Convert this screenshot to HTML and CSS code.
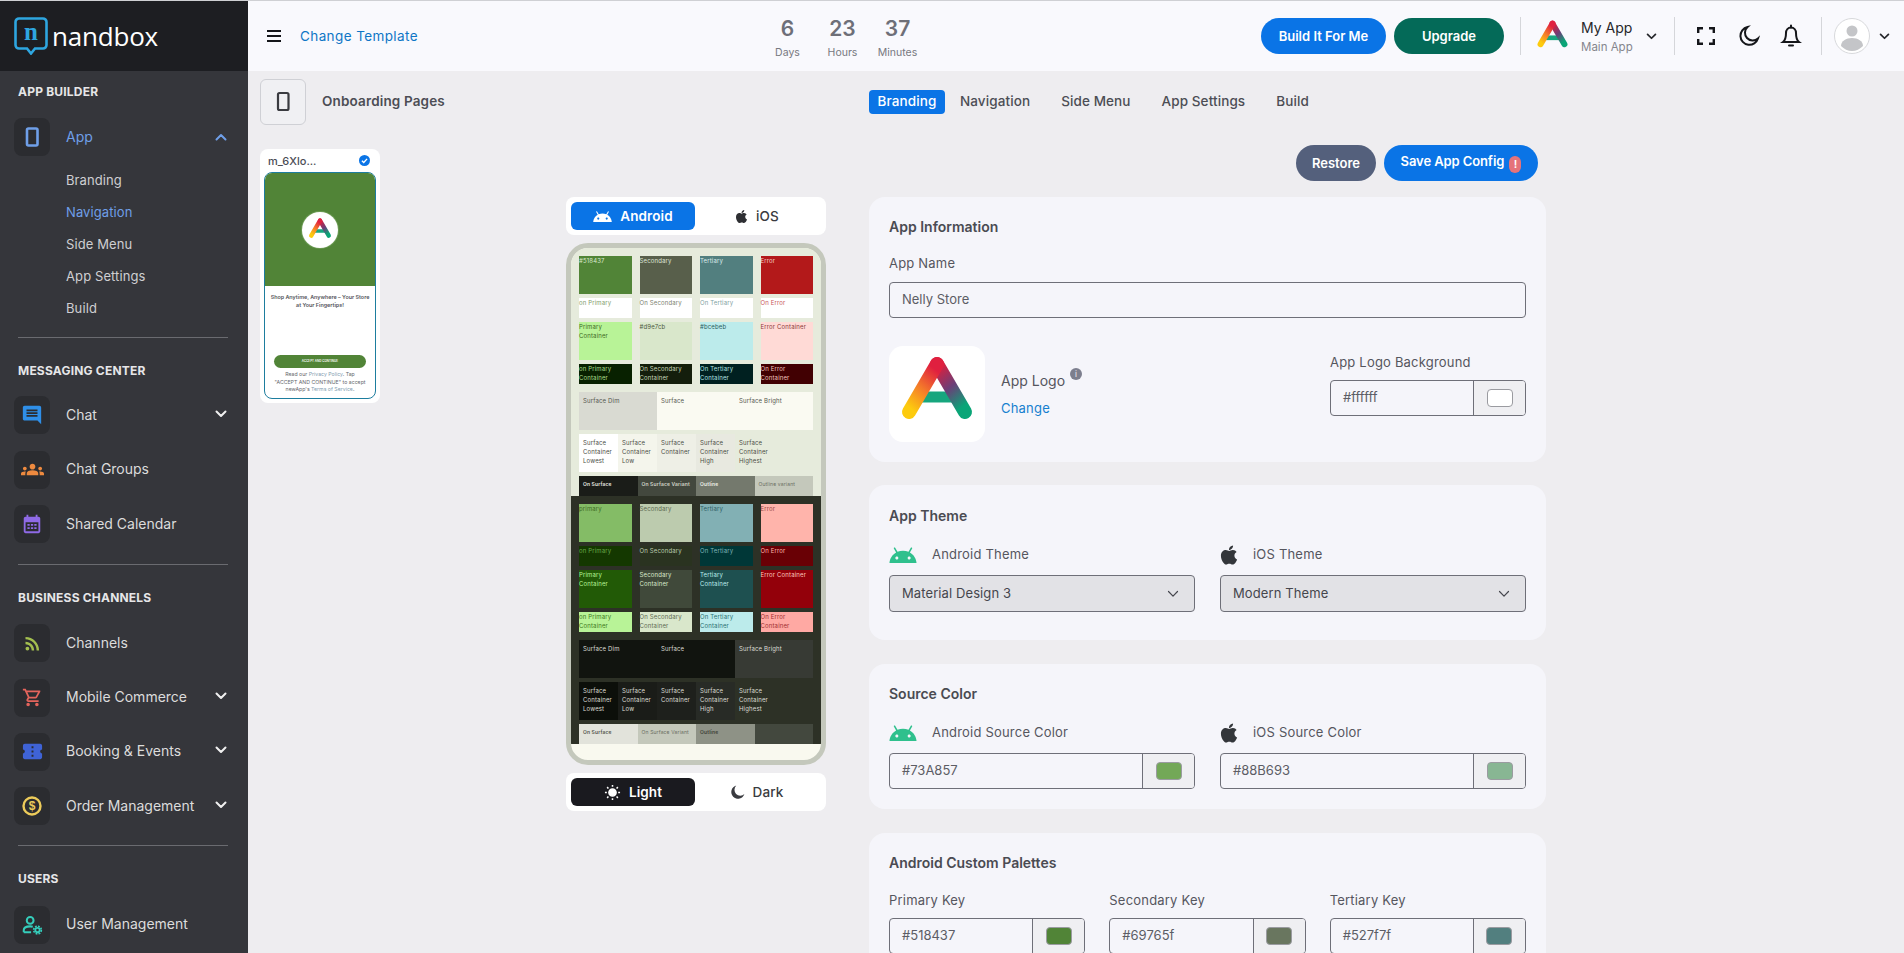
FILE: index.html
```html
<!DOCTYPE html>
<html>
<head>
  <meta charset="utf-8">
  <title>nandbox</title>
  <link rel="stylesheet" href="styles.css">
</head>
<body>
  <!-- shared icons -->
  <svg class="defs" width="0" height="0">
    <defs>
      <linearGradient id="legL" x1="0.7" y1="0" x2="0.2" y2="1">
        <stop offset="0" stop-color="#e0203f"/>
        <stop offset="0.5" stop-color="#f47a2a"/>
        <stop offset="1" stop-color="#fdcb0e"/>
      </linearGradient>
      <linearGradient id="legR" x1="0.2" y1="0" x2="0.7" y2="1">
        <stop offset="0" stop-color="#d9203f"/>
        <stop offset="0.5" stop-color="#6a3f78"/>
        <stop offset="1" stop-color="#0aa577"/>
      </linearGradient>
      <symbol id="i-logo" viewBox="0 0 96 96">
        <path d="M32 51H64" stroke="#17a67e" stroke-width="11" fill="none"/>
        <path d="M48 18L76 66" stroke="url(#legR)" stroke-width="14" stroke-linecap="round" fill="none"/>
        <path d="M48 18L20 66" stroke="url(#legL)" stroke-width="14" stroke-linecap="round" fill="none"/>
      </symbol>
      <symbol id="i-android" viewBox="1 5 22 13">
        <path d="M17.6 9.48l1.84-3.18c.16-.31.04-.69-.26-.85-.29-.15-.65-.06-.83.22l-1.88 3.24c-2.86-1.21-6.08-1.21-8.94 0L5.65 5.67c-.19-.29-.58-.38-.87-.2-.28.18-.37.54-.22.83L6.4 9.48C3.3 11.25 1.28 14.44 1 18h22c-.28-3.56-2.3-6.75-5.4-8.52zM7 15.25c-.69 0-1.25-.56-1.25-1.25S6.31 12.75 7 12.75 8.25 13.31 8.25 14 7.69 15.25 7 15.25zm10 0c-.69 0-1.25-.56-1.25-1.25s.56-1.25 1.25-1.25 1.25.56 1.25 1.25-.56 1.25-1.25 1.25z"/>
      </symbol>
      <symbol id="i-apple" viewBox="0 0 384 512">
        <path d="M318.7 268.7c-.2-36.7 16.4-64.4 50-84.8-18.8-26.9-47.2-41.7-84.7-44.6-35.5-2.8-74.3 20.7-88.5 20.7-15 0-49.4-19.7-76.4-19.7C63.3 141.2 4 184.8 4 273.5q0 39.3 14.4 81.2c12.8 36.7 59 126.7 107.2 125.2 25.2-.6 43-17.9 75.8-17.9 31.8 0 48.3 17.9 76.4 17.9 48.6-.7 90.4-82.5 102.6-119.3-65.2-30.7-61.7-90-61.7-91.9zm-56.6-164.2c27.3-32.4 24.8-61.9 24-72.5-24.1 1.4-52 16.4-67.9 34.9-17.5 19.8-27.8 44.3-25.6 71.9 26.1 2 49.9-11.4 69.5-34.3z"/>
      </symbol>
      <symbol id="i-chevron" viewBox="0 0 12 8">
        <path d="M1.5 1.5L6 6l4.5-4.5" fill="none" stroke="currentColor" stroke-width="2" stroke-linecap="round" stroke-linejoin="round"/>
      </symbol>
      <symbol id="i-chevron-thin" viewBox="0 0 12 8">
        <path d="M1.5 1.5L6 6.2l4.5-4.7" fill="none" stroke="currentColor" stroke-width="1.2" stroke-linecap="round" stroke-linejoin="round"/>
      </symbol>
    </defs>
  </svg>

  <div class="layout">
    <!-- Sidebar -->
    <aside class="sidebar">
      <div class="brand">
        <div class="brand-mark">
          <svg width="34" height="38" viewBox="0 0 34 38"><path d="M5 1.5H29A3.5 3.5 0 0 1 32.500 5V28A3.500 3.500 0 0 1 29 31.500H21L17 36.500L13 31.500H5A3.500 3.500 0 0 1 1.500 28V5A3.500 3.500 0 0 1 5 1.500Z" fill="none" stroke="#2ea6e0" stroke-width="2.600"/></svg>
          <span class="brand-n">n</span>
        </div>
        <span class="brand-name">nandbox</span>
      </div>

      <nav class="nav">
        <div class="nav-label">APP BUILDER</div>
        <a class="nav-item active">
          <span class="nav-icon"><svg width="24" height="24" viewBox="0 0 24 24"><rect x="7" y="3.500" width="10.500" height="17" rx="1.500" fill="none" stroke="#6f9fe8" stroke-width="2.600"/></svg></span>
          <span class="nav-text">App</span>
          <svg class="nav-chev up" width="12" height="8"><use href="#i-chevron"/></svg>
        </a>
        <div class="sub">
          <a>Branding</a>
          <a class="active">Navigation</a>
          <a>Side Menu</a>
          <a>App Settings</a>
          <a>Build</a>
        </div>
        <div class="nav-line"></div>

        <div class="nav-label msg">MESSAGING CENTER</div>
        <a class="nav-item">
          <span class="nav-icon"><svg width="22" height="22" viewBox="0 0 24 24" fill="#2f8fe8"><path transform="matrix(-1 0 0 1 24 0)" d="M20 2H4c-1.100 0-2 .9-2 2v18l4-4h14c1.100 0 2-.9 2-2V4c0-1.100-.9-2-2-2zm-2 12H6v-2h12v2zm0-3H6V9h12v2zm0-3H6V6h12v2z"/></svg></span>
          <span class="nav-text">Chat</span>
          <svg class="nav-chev" width="12" height="8"><use href="#i-chevron"/></svg>
        </a>
        <a class="nav-item">
          <span class="nav-icon"><svg width="23" height="23" viewBox="0 0 24 24" fill="#ee8a3f"><path d="M12 12.750c1.630 0 3.070.39 4.240.9 1.080.48 1.760 1.560 1.760 2.730V18H6v-1.610c0-1.180.68-2.260 1.760-2.730 1.170-.52 2.610-.91 4.240-.91zM4 13c1.100 0 2-.9 2-2s-.9-2-2-2-2 .9-2 2 .9 2 2 2zm1.130 1.100c-.37-.06-.74-.1-1.130-.1-.99 0-1.930.21-2.780.58C.48 14.900 0 15.620 0 16.430V18h4.500v-1.610c0-.83.23-1.610.63-2.290zM20 13c1.100 0 2-.9 2-2s-.9-2-2-2-2 .9-2 2 .9 2 2 2zm4 3.430c0-.81-.48-1.530-1.220-1.850-.85-.37-1.790-.58-2.780-.58-.39 0-.76.04-1.130.1.4.68.63 1.460.63 2.290V18H24v-1.570zM12 6c1.660 0 3 1.340 3 3s-1.340 3-3 3-3-1.340-3-3 1.340-3 3-3z"/></svg></span>
          <span class="nav-text">Chat Groups</span>
        </a>
        <a class="nav-item">
          <span class="nav-icon"><svg width="22" height="22" viewBox="0 0 24 24" fill="#8f6ae6"><path d="M19 4h-1V2h-2v2H8V2H6v2H5c-1.100 0-2 .9-2 2v14c0 1.100.9 2 2 2h14c1.100 0 2-.9 2-2V6c0-1.100-.9-2-2-2zm0 16H5V10h14v10z"/><path d="M7 12h2.500v2H7zm3.800 0h2.500v2h-2.500zm3.700 0H17v2h-2.500zM7 15.500h2.500v2H7zm3.800 0h2.500v2h-2.500zm3.700 0H17v2h-2.500z"/></svg></span>
          <span class="nav-text">Shared Calendar</span>
        </a>
        <div class="nav-line"></div>

        <div class="nav-label">BUSINESS CHANNELS</div>
        <a class="nav-item">
          <span class="nav-icon"><svg width="21" height="21" viewBox="0 0 24 24" fill="#a3bf4f"><path d="M6.180 15.640a2.180 2.180 0 1 1 0 4.360 2.180 2.180 0 0 1 0-4.360zM4 4.440v2.830c7.030 0 12.730 5.700 12.730 12.730h2.830c0-8.590-6.970-15.560-15.560-15.560zm0 5.660v2.830c3.900 0 7.070 3.170 7.070 7.070h2.830c0-5.470-4.430-9.900-9.900-9.900z"/></svg></span>
          <span class="nav-text">Channels</span>
        </a>
        <a class="nav-item">
          <span class="nav-icon"><svg width="21" height="21" viewBox="0 0 24 24" fill="#e4645c"><path d="M15.550 13c.75 0 1.410-.41 1.750-1.030l3.580-6.490A.996.996 0 0 0 20.010 4H5.210l-.94-2H1v2h2l3.600 7.590-1.350 2.440C4.520 15.370 5.480 17 7 17h12v-2H7l1.100-2h7.450zM6.160 6h12.150l-2.760 5H8.530L6.160 6zM7 18c-1.100 0-1.990.9-1.990 2S5.900 22 7 22s2-.9 2-2-.9-2-2-2zm10 0c-1.100 0-1.990.9-1.990 2s.89 2 1.990 2 2-.9 2-2-.9-2-2-2z"/></svg></span>
          <span class="nav-text">Mobile Commerce</span>
          <svg class="nav-chev" width="12" height="8"><use href="#i-chevron"/></svg>
        </a>
        <a class="nav-item">
          <span class="nav-icon"><svg width="23" height="23" viewBox="0 0 24 24" fill="#3f63d6"><path d="M22 10V6c0-1.110-.9-2-2-2H4c-1.100 0-1.990.89-1.990 2v4c1.100 0 1.990.9 1.990 2s-.89 2-2 2v4c0 1.100.9 2 2 2h16c1.100 0 2-.9 2-2v-4c-1.100 0-2-.9-2-2s.9-2 2-2zm-9 7.500h-2v-2h2v2zm0-4.500h-2v-2h2v2zm0-4.500h-2v-2h2v2z"/></svg></span>
          <span class="nav-text">Booking &amp; Events</span>
          <svg class="nav-chev" width="12" height="8"><use href="#i-chevron"/></svg>
        </a>
        <a class="nav-item">
          <span class="nav-icon"><svg width="22" height="22" viewBox="0 0 22 22"><circle cx="11" cy="11" r="8.500" fill="none" stroke="#eccb5a" stroke-width="2.400"/><text x="11" y="15.200" text-anchor="middle" class="dollar">$</text></svg></span>
          <span class="nav-text">Order Management</span>
          <svg class="nav-chev" width="12" height="8"><use href="#i-chevron"/></svg>
        </a>
        <div class="nav-line users"></div>

        <div class="nav-label">USERS</div>
        <a class="nav-item">
          <span class="nav-icon"><svg width="22" height="22" viewBox="0 0 24 24" fill="none" stroke="#35cdbb" stroke-width="2.200"><circle cx="10" cy="7" r="3.700"/><path d="M3 20v-2.500c0-2.500 3-4 7-4 1 0 2 .1 2.800.3M3 20h8"/><circle cx="18" cy="17.500" r="2.400" stroke-width="2"/><circle cx="18" cy="17.500" r="4.200" stroke-width="1.800" stroke-dasharray="2 1.300"/></svg></span>
          <span class="nav-text">User Management</span>
        </a>
      </nav>
    </aside>

    <div class="main">
      <!-- Top bar -->
      <header class="topbar">
        <div class="top-left">
          <svg class="burger" width="14" height="12" viewBox="0 0 14 12"><path d="M0 1h14M0 6h14M0 11h14" stroke="#15161a" stroke-width="2"/></svg>
          <a class="change-link">Change Template</a>
        </div>
        <div class="countdown">
          <div class="count"><b>6</b><span>Days</span></div>
          <div class="count"><b>23</b><span>Hours</span></div>
          <div class="count"><b>37</b><span>Minutes</span></div>
        </div>
        <div class="top-right">
          <button class="pill pill-blue build-btn">Build It For Me</button>
          <button class="pill pill-green upgrade-btn">Upgrade</button>
          <span class="top-sep first"></span>
          <svg class="app-mark" width="41" height="41"><use href="#i-logo"/></svg>
          <div class="app-switch">
            <div class="app-title">My App</div>
            <div class="app-sub">Main App</div>
          </div>
          <svg class="app-chev" width="11" height="7"><use href="#i-chevron"/></svg>
          <span class="top-sep second"></span>
          <svg class="tool-full" width="18" height="18" viewBox="0 0 18 18" fill="none" stroke="#15161a" stroke-width="2.400"><path d="M1.200 6V1.200H6M12 1.200h4.800V6M16.800 12v4.800H12M6 16.800H1.200V12"/></svg>
          <svg class="tool-moon" width="24" height="24" viewBox="0 0 24 24" fill="none" stroke="#15161a" stroke-width="2"><path d="M21 14.500A9 9 0 1 1 10.500 3 7.500 7.500 0 0 0 21 14.500z"/></svg>
          <svg class="tool-bell" width="22" height="24" viewBox="0 0 22 24" fill="none" stroke="#15161a" stroke-width="2"><path d="M11 3.500c-3 0-5 2.300-5 5.500 0 5-1 7.500-3 9h16c-2-1.500-3-4-3-9 0-3.200-2-5.500-5-5.500z"/><path d="M11 1.500v2M9 21.500h4" stroke-linecap="round"/></svg>
          <span class="top-sep third"></span>
          <div class="avatar">
            <svg width="34" height="34" viewBox="0 0 34 34" fill="#c4c5c8"><circle cx="17" cy="12" r="5.500"/><path d="M6 27c0-5 5-8 11-8s11 3 11 8c-3 3-7 5-11 5s-8-2-11-5z"/></svg>
          </div>
          <svg class="user-chev" width="11" height="7"><use href="#i-chevron"/></svg>
        </div>
      </header>

      <div class="content">
        <!-- Onboarding column -->
        <section class="pages">
          <div class="pages-head">
            <span class="pages-icon"><svg width="22" height="24" viewBox="0 0 22 24"><rect x="6" y="3" width="10.500" height="17" rx="1.500" fill="none" stroke="#3a3b40" stroke-width="2.200"/></svg></span>
            <span class="pages-title">Onboarding Pages</span>
          </div>
          <div class="page-card">
            <div class="page-card-head">
              <span>m_6Xlo...</span>
              <svg width="11" height="11" viewBox="0 0 12 12"><circle cx="6" cy="6" r="6" fill="#0a74e6"/><path d="M3.200 6.200l2 2 3.600-4" fill="none" stroke="#fff" stroke-width="1.500"/></svg>
            </div>
            <div class="page-shot">
              <div class="shot-top">
                <span class="shot-logo"><svg width="30" height="30"><use href="#i-logo"/></svg></span>
              </div>
              <div class="shot-body">
                <p class="shot-title">Shop Anytime, Anywhere – Your Store<br>at Your Fingertips!</p>
                <div class="shot-btn">ACCEPT AND CONTINUE</div>
                <p class="shot-terms">Read our <i>Privacy Policy</i>. Tap<br>"ACCEPT AND CONTINUE" to accept<br>newApp's <i>Terms of Service</i>.</p>
              </div>
            </div>
          </div>
        </section>

        <!-- Phone preview -->
        <section class="preview">
          <div class="switch">
            <div class="switch-opt on-blue">
              <svg width="19" height="11" fill="#fff"><use href="#i-android"/></svg>
              <span>Android</span>
            </div>
            <div class="switch-opt">
              <svg width="13" height="15" fill="#2e2f33"><use href="#i-apple"/></svg>
              <span>iOS</span>
            </div>
          </div>

          <div class="phone">
            <div class="palette light">
              <div class="tones">
                <div class="primary">#518437</div><div class="secondary">Secondary</div><div class="tertiary">Tertiary</div><div class="error">Error</div>
                <div class="short on-primary">on Primary</div><div class="short on-secondary">On Secondary</div><div class="short on-tertiary">On Tertiary</div><div class="short on-error">On Error</div>
                <div class="primary-c">Primary<br>Container</div><div class="secondary-c">#d9e7cb</div><div class="tertiary-c">#bcebeb</div><div class="error-c">Error Container</div>
                <div class="short on-primary-c">on Primary<br>Container</div><div class="short on-secondary-c">On Secondary<br>Container</div><div class="short on-tertiary-c">On Tertiary<br>Container</div><div class="short on-error-c">On Error<br>Container</div>
              </div>
              <div class="surfaces">
                <div class="s-dim">Surface Dim</div><div class="s-main">Surface</div><div class="s-bright">Surface Bright</div>
              </div>
              <div class="containers">
                <div class="c-lowest">Surface<br>Container<br>Lowest</div><div class="c-low">Surface<br>Container<br>Low</div><div class="c-mid">Surface<br>Container</div><div class="c-high">Surface<br>Container<br>High</div><div class="c-highest">Surface<br>Container<br>Highest</div>
              </div>
              <div class="outlines">
                <div class="o-surface">On Surface</div><div class="o-variant">On Surface Variant</div><div class="o-outline">Outline</div><div class="o-outline-v">Outline variant</div>
              </div>
            </div>
            <div class="palette dark">
              <div class="tones">
                <div class="primary">primary</div><div class="secondary">Secondary</div><div class="tertiary">Tertiary</div><div class="error">Error</div>
                <div class="short on-primary">on Primary</div><div class="short on-secondary">On Secondary</div><div class="short on-tertiary">On Tertiary</div><div class="short on-error">On Error</div>
                <div class="primary-c">Primary<br>Container</div><div class="secondary-c">Secondary<br>Container</div><div class="tertiary-c">Tertiary<br>Container</div><div class="error-c">Error Container</div>
                <div class="short on-primary-c">on Primary<br>Container</div><div class="short on-secondary-c">On Secondary<br>Container</div><div class="short on-tertiary-c">On Tertiary<br>Container</div><div class="short on-error-c">On Error<br>Container</div>
              </div>
              <div class="surfaces">
                <div class="s-dim">Surface Dim</div><div class="s-main">Surface</div><div class="s-bright">Surface Bright</div>
              </div>
              <div class="containers">
                <div class="c-lowest">Surface<br>Container<br>Lowest</div><div class="c-low">Surface<br>Container<br>Low</div><div class="c-mid">Surface<br>Container</div><div class="c-high">Surface<br>Container<br>High</div><div class="c-highest">Surface<br>Container<br>Highest</div>
              </div>
              <div class="outlines">
                <div class="o-surface">On Surface</div><div class="o-variant">On Surface Variant</div><div class="o-outline">Outline</div><div class="o-outline-v"></div>
              </div>
            </div>
          </div>

          <div class="switch mode">
            <div class="switch-opt on-dark">
              <svg width="17" height="17" viewBox="0 0 18 18" fill="none" stroke="#fff" stroke-width="1.600"><circle cx="9" cy="9" r="3.800" fill="#fff"/><path d="M9 1v2M9 15v2M1 9h2M15 9h2M3.300 3.300l1.400 1.400M13.300 13.300l1.400 1.400M3.300 14.700l1.400-1.400M13.300 4.700l1.400-1.400"/></svg>
              <span>Light</span>
            </div>
            <div class="switch-opt">
              <svg width="14" height="14" viewBox="0 0 24 24" fill="#3a3b40"><path d="M23 15.500A11.500 11.500 0 1 1 9 1a9.500 9.500 0 0 0 14 14.500z"/></svg>
              <span>Dark</span>
            </div>
          </div>
        </section>

        <!-- Config column -->
        <section class="config">
          <div class="tabs">
            <a class="tab active">Branding</a>
            <a class="tab">Navigation</a>
            <a class="tab">Side Menu</a>
            <a class="tab">App Settings</a>
            <a class="tab">Build</a>
          </div>
          <div class="actions">
            <button class="pill pill-slate">Restore</button>
            <button class="pill pill-blue save-btn">Save App Config <span class="warn">!</span></button>
          </div>

          <div class="card card-info">
            <h3>App Information</h3>
            <label class="field-label name-label">App Name</label>
            <div class="input">Nelly Store</div>
            <div class="logo-row">
              <div class="logo-box"><svg width="96" height="96"><use href="#i-logo"/></svg></div>
              <div class="logo-meta">
                <div class="logo-name">App Logo <span class="info-dot">i</span></div>
                <a class="logo-change">Change</a>
              </div>
              <div class="logo-bg">
                <label class="field-label">App Logo Background</label>
                <div class="color-input">
                  <span class="color-value">#ffffff</span>
                  <span class="color-cell"><span class="swatch sw-white"></span></span>
                </div>
              </div>
            </div>
          </div>

          <div class="card card-theme">
            <h3>App Theme</h3>
            <div class="two-col">
              <div>
                <div class="os-label"><svg class="os-android" width="28" height="16"><use href="#i-android"/></svg><span>Android Theme</span></div>
                <div class="select"><span>Material Design 3</span><svg width="12" height="8"><use href="#i-chevron-thin"/></svg></div>
              </div>
              <div>
                <div class="os-label"><svg class="os-apple" width="18" height="22"><use href="#i-apple"/></svg><span>iOS Theme</span></div>
                <div class="select"><span>Modern Theme</span><svg width="12" height="8"><use href="#i-chevron-thin"/></svg></div>
              </div>
            </div>
          </div>

          <div class="card card-source">
            <h3>Source Color</h3>
            <div class="two-col">
              <div>
                <div class="os-label"><svg class="os-android" width="28" height="16"><use href="#i-android"/></svg><span>Android Source Color</span></div>
                <div class="color-input">
                  <span class="color-value">#73A857</span>
                  <span class="color-cell"><span class="swatch sw-android"></span></span>
                </div>
              </div>
              <div>
                <div class="os-label"><svg class="os-apple" width="18" height="22"><use href="#i-apple"/></svg><span>iOS Source Color</span></div>
                <div class="color-input">
                  <span class="color-value">#88B693</span>
                  <span class="color-cell"><span class="swatch sw-ios"></span></span>
                </div>
              </div>
            </div>
          </div>

          <div class="card card-palettes">
            <h3>Android Custom Palettes</h3>
            <div class="three-col">
              <div>
                <label class="field-label">Primary Key</label>
                <div class="color-input">
                  <span class="color-value">#518437</span>
                  <span class="color-cell"><span class="swatch sw-primary"></span></span>
                </div>
              </div>
              <div>
                <label class="field-label">Secondary Key</label>
                <div class="color-input">
                  <span class="color-value">#69765f</span>
                  <span class="color-cell"><span class="swatch sw-secondary"></span></span>
                </div>
              </div>
              <div>
                <label class="field-label">Tertiary Key</label>
                <div class="color-input">
                  <span class="color-value">#527f7f</span>
                  <span class="color-cell"><span class="swatch sw-tertiary"></span></span>
                </div>
              </div>
            </div>
          </div>
        </section>
      </div>
    </div>
  </div>
</body>
</html>
```

FILE: styles.css
```css
* {
  margin: 0;
  padding: 0;
  box-sizing: border-box;
}

html, body {
  height: 953px;
  overflow: hidden;
}

body {
  font-family: Inter, "Noto Sans", sans-serif;
  font-size: 13px;
  color: #4c4d55;
  background: #eeedf0;
  border-top: 1px solid #cfd0d4;
}

.defs {
  position: absolute;
}

.layout {
  display: flex;
  height: 952px;
}

/* Sidebar */
.sidebar {
  width: 248px;
  flex-shrink: 0;
  background: #35363b;
  color: #dcdcdc;
  overflow: hidden;
}

.brand {
  height: 70px;
  background: #1d1e22;
  display: flex;
  align-items: center;
  padding-left: 14px;
}

.brand-mark {
  position: relative;
  width: 34px;
  height: 38px;
}

.brand-n {
  position: absolute;
  top: 3px;
  left: 0;
  width: 34px;
  text-align: center;
  font-family: "Liberation Serif", serif;
  font-weight: 700;
  font-size: 25px;
  line-height: 24px;
  color: #2ea6e0;
}

.brand-name {
  margin-left: 4px;
  font-family: "Open Sans", sans-serif;
  font-size: 26px;
  font-weight: 500;
  color: #fff;
  letter-spacing: -0.2px;
}

.nav {
  padding-top: 12px;
}

.nav-label {
  margin: 0 0 9px 18px;
  font-size: 12px;
  line-height: 18px;
  font-weight: 700;
  letter-spacing: 0.2px;
  color: #e6e6e8;
}

.nav-label.msg {
  margin-bottom: 8px;
}

.nav-item {
  display: flex;
  align-items: center;
  height: 54.3px;
  padding-left: 14px;
}

.nav-icon {
  width: 36px;
  height: 38px;
  border-radius: 8px;
  background: #2b2c30;
  display: flex;
  align-items: center;
  justify-content: center;
  flex-shrink: 0;
}

.nav-text {
  margin-left: 16px;
  padding-bottom: 2px;
  font-size: 14px;
  flex: 1;
}

.nav-item.active .nav-text {
  color: #6f9fe8;
}

.nav-chev {
  margin: 0 21px 3px 0;
  color: #f0f0f0;
}

.nav-chev.up {
  transform: rotate(180deg);
  margin-bottom: 0;
  color: #6f9fe8;
}

.sub a {
  display: block;
  height: 32px;
  line-height: 32px;
  padding-left: 66px;
  font-size: 13px;
  letter-spacing: 0.1px;
  color: #cfcfd2;
}

.sub a.active {
  color: #6f9fe8;
}

.nav-line {
  height: 1px;
  margin: 13px 20px 24px 18px;
  background: #6a6b70;
}

.nav-line.users {
  margin-top: 12px;
}

.dollar {
  font-family: "Liberation Sans", sans-serif;
  font-size: 12px;
  font-weight: 700;
  fill: #eccb5a;
}

/* Top bar */
.main {
  flex: 1;
  min-width: 0;
}

.topbar {
  height: 70px;
  background: #f9f9fd;
  display: flex;
  align-items: center;
}

.top-left {
  width: 512px;
  display: flex;
  align-items: center;
  padding-left: 19px;
}

.change-link {
  margin-left: 19px;
  font-size: 13.5px;
  letter-spacing: 0.4px;
  color: #0f76c6;
}

.countdown {
  display: flex;
}

.count {
  width: 55px;
  text-align: center;
}

.count b {
  display: block;
  font-size: 21px;
  line-height: 30px;
  font-weight: 600;
  color: #6e6f78;
}

.count span {
  display: block;
  margin-top: 2px;
  font-size: 10.5px;
  color: #77787f;
}

.top-right {
  margin-left: auto;
  display: flex;
  align-items: center;
}

.pill {
  height: 36px;
  border: none;
  border-radius: 18px;
  font-family: Inter, sans-serif;
  font-size: 13px;
  font-weight: 600;
  color: #fff;
}

.pill-blue {
  background: #0a74e6;
}

.pill-green {
  background: #046a58;
}

.pill-slate {
  background: #54607c;
  width: 80px;
}

.build-btn {
  width: 125px;
}

.upgrade-btn {
  width: 110px;
  margin-left: 8px;
}

.top-sep {
  width: 1px;
  height: 38px;
  background: #d5d6da;
}

.top-sep.first {
  margin-left: 16px;
}

.app-mark {
  margin-left: 11px;
}

.app-switch {
  margin-left: 8px;
  width: 64px;
}

.app-title {
  font-size: 14px;
  line-height: 20px;
  color: #26272b;
}

.app-sub {
  margin-top: 1px;
  font-size: 11.5px;
  line-height: 16px;
  color: #85868d;
}

.app-chev {
  margin-left: 1px;
  color: #26272b;
}

.top-sep.second {
  margin-left: 17px;
}

.tool-full {
  margin-left: 22px;
}

.tool-moon {
  margin-left: 22px;
}

.tool-bell {
  margin-left: 19px;
}

.top-sep.third {
  margin-left: 19px;
}

.avatar {
  margin-left: 12px;
  width: 36px;
  height: 36px;
  border-radius: 50%;
  border: 1px solid #d8d9dc;
  background: #fff;
  overflow: hidden;
}

.user-chev {
  margin-left: 9px;
  margin-right: 14px;
  color: #26272b;
}

/* Main content */
.content {
  display: flex;
  padding: 8px 0 0 12px;
}

.pages {
  width: 120px;
  flex-shrink: 0;
}

.pages-head {
  display: flex;
  align-items: center;
  white-space: nowrap;
}

.pages-icon {
  width: 46px;
  height: 46px;
  flex-shrink: 0;
  border: 1px solid #cfd0d5;
  border-radius: 6px;
  background: #f0f0f3;
  display: flex;
  align-items: center;
  justify-content: center;
}

.pages-title {
  margin-left: 16px;
  padding-bottom: 2px;
  font-size: 13.5px;
  font-weight: 600;
  letter-spacing: 0.15px;
}

.page-card {
  width: 120px;
  height: 254px;
  margin-top: 24px;
  padding: 0 4px;
  border-radius: 8px;
  background: #fff;
}

.page-card-head {
  height: 23px;
  display: flex;
  align-items: center;
  justify-content: space-between;
  padding: 0 6px 0 4px;
  font-size: 11px;
  font-weight: 500;
}

.page-shot {
  height: 227px;
  border: 1.500px solid #1d7d9e;
  border-radius: 8px;
  overflow: hidden;
  display: flex;
  flex-direction: column;
}

.shot-top {
  height: 113px;
  background: #518437;
  display: flex;
  align-items: center;
  justify-content: center;
}

.shot-logo {
  width: 36px;
  height: 36px;
  border-radius: 50%;
  background: #fff;
  box-shadow: 0 0 0 1px #6b9a53;
  display: flex;
  align-items: center;
  justify-content: center;
}

.shot-body {
  flex: 1;
  text-align: center;
  padding-top: 7px;
  white-space: nowrap;
}

.shot-title {
  font-size: 5.4px;
  line-height: 8px;
  font-weight: 600;
  color: #55565c;
}

.shot-btn {
  height: 13px;
  margin: 46px 9px 0;
  border-radius: 7px;
  background: #518437;
  font-size: 3px;
  line-height: 13px;
  font-weight: 600;
  color: #fff;
}

.shot-terms {
  margin-top: 3px;
  font-size: 5.2px;
  line-height: 7.500px;
  color: #66676d;
}

.shot-terms i {
  font-style: normal;
  color: #7f9db0;
}

/* Phone preview */
.preview {
  width: 260px;
  margin: 118px 0 0 186px;
  flex-shrink: 0;
}

.switch {
  height: 38px;
  padding: 5px;
  border-radius: 8px;
  background: #fff;
  display: flex;
}

.switch-opt {
  width: 124px;
  height: 28px;
  border-radius: 6px;
  display: flex;
  align-items: center;
  justify-content: center;
  gap: 8px;
  font-size: 13.5px;
  letter-spacing: 0.1px;
  font-weight: 500;
  color: #3a3b40;
}

.on-blue {
  background: #0a74e6;
  color: #fff;
  font-weight: 600;
}

.on-dark {
  background: #1a1a1f;
  color: #fff;
  font-weight: 600;
}

.phone {
  margin-top: 8px;
  height: 522px;
  border: 5px solid #c4c8bc;
  border-radius: 22px;
  background: #f9f9ef;
  overflow: hidden;
}

.switch.mode {
  margin-top: 8px;
}

.palette {
  padding: 8px 8px 0;
  font-size: 6px;
  line-height: 9px;
  letter-spacing: 0.15px;
  white-space: nowrap;
}

.tones {
  display: grid;
  grid-template-columns: repeat(4, 1fr);
  grid-template-rows: 38px 20px 38px 20px;
  gap: 4px 8px;
}

.surfaces {
  display: grid;
  grid-template-columns: repeat(3, 1fr);
  height: 38px;
  margin-top: 8px;
}

.surfaces div,
.containers div {
  padding: 4px;
}

.containers {
  display: grid;
  grid-template-columns: repeat(5, 39px);
  height: 38px;
  margin-top: 4px;
}

.outlines {
  display: grid;
  grid-template-columns: repeat(4, 1fr);
  height: 20px;
  margin-top: 4px;
}

.outlines div {
  padding: 4px;
  font-size: 5px;
  font-weight: 600;
}

/* Light palette */
.light { background: #e6ebdc; }
.light .primary { background: #518437; color: #dbe9d0; }
.light .secondary { background: #585f4b; color: #dfe4d6; }
.light .tertiary { background: #527f7f; color: #dcecec; }
.light .error { background: #b3191a; color: #f3c9c6; }
.light .on-primary { background: #fff; color: #7f9e6c; }
.light .on-secondary { background: #fff; color: #7c8270; }
.light .on-tertiary { background: #fff; color: #7fa2a2; }
.light .on-error { background: #fff; color: #c9585a; }
.light .primary-c { background: #b8f397; color: #3d6a24; }
.light .secondary-c { background: #d9e7cb; color: #4e5a42; }
.light .tertiary-c { background: #bcebeb; color: #2a5e5e; }
.light .error-c { background: #ffdad6; color: #8c3a3a; }
.light .on-primary-c { background: #082100; color: #a9dc8b; }
.light .on-secondary-c { background: #141e0c; color: #c8d6ba; }
.light .on-tertiary-c { background: #002020; color: #b2e0e0; }
.light .on-error-c { background: #410002; color: #f0c3bf; }
.light .s-dim { background: #d9dad2; color: #55574f; }
.light .s-main { background: #fafaf2; color: #55574f; }
.light .s-bright { background: #fafaf2; color: #55574f; }
.light .c-lowest { background: #fff; color: #4c4e46; }
.light .c-low { background: #f4f5ec; color: #4c4e46; }
.light .c-mid { background: #eeefe6; color: #4c4e46; }
.light .c-high { background: #e8e9e0; color: #4c4e46; }
.light .c-highest { background: #e6ebdc; color: #4c4e46; }
.light .o-surface { background: #1a1c18; color: #e8e9e0; }
.light .o-variant { background: #43483e; color: #d0d4c8; }
.light .o-outline { background: #74796d; color: #eef0e8; }
.light .o-outline-v { background: #c4c8bb; color: #6a6e62; font-weight: 400; }

/* Dark palette */
.dark { background: #2d3126; }
.dark .primary { background: #84bc66; color: #3d6a24; }
.dark .secondary { background: #bccbae; color: #5c6a50; }
.dark .tertiary { background: #82b0b4; color: #2f6066; }
.dark .error { background: #ffb4ab; color: #9c4a44; }
.dark .on-primary { background: #143800; color: #68a848; }
.dark .on-secondary { background: #2a3320; color: #bccbae; }
.dark .on-tertiary { background: #003737; color: #7fb4b8; }
.dark .on-error { background: #690005; color: #ffb4ab; }
.dark .primary-c { background: #225a06; color: #b8f397; }
.dark .secondary-c { background: #40493a; color: #d9e7cb; }
.dark .tertiary-c { background: #1e5050; color: #bcebeb; }
.dark .error-c { background: #93000a; color: #ffc4bc; }
.dark .on-primary-c { background: #b8f397; color: #3d7a20; }
.dark .on-secondary-c { background: #d9e7cb; color: #5e6b52; }
.dark .on-tertiary-c { background: #bcebeb; color: #2a7272; }
.dark .on-error-c { background: #ffa9a3; color: #a03030; }
.dark .s-dim { background: #11140f; color: #dcdcd4; }
.dark .s-main { background: #11140f; color: #dcdcd4; }
.dark .s-bright { background: #373a34; color: #dcdcd4; }
.dark .c-lowest { background: #0c0f0a; color: #dcdcd4; }
.dark .c-low { background: #1a1c18; color: #dcdcd4; }
.dark .c-mid { background: #1e201c; color: #dcdcd4; }
.dark .c-high { background: #282b26; color: #dcdcd4; }
.dark .c-highest { background: #2d3126; color: #dcdcd4; }
.dark .o-surface { background: #e2e3db; color: #55574f; }
.dark .o-variant { background: #c4c8bb; color: #6a6e62; font-weight: 400; }
.dark .o-outline { background: #8e9286; color: #404338; }
.dark .o-outline-v { background: #43483e; }

/* Config column */
.config {
  width: 677px;
  margin-left: 43px;
  flex-shrink: 0;
}

.tabs {
  display: flex;
  margin-top: 11px;
  height: 24px;
}

.tab {
  padding: 0 8px;
  margin-left: 15px;
  line-height: 23px;
  font-size: 13.5px;
  letter-spacing: 0.1px;
  font-weight: 500;
  color: #4c4d55;
}

.tab:first-child {
  margin-left: 0;
}

.tab.active {
  background: #0a74e6;
  color: #fff;
  border-radius: 4px;
  margin-right: -8px;
  width: 76px;
  padding: 0;
  text-align: center;
}

.actions {
  display: flex;
  justify-content: flex-end;
  gap: 8px;
  margin-top: 31px;
  padding-right: 8px;
}

.save-btn {
  width: 154px;
  white-space: nowrap;
  letter-spacing: -0.1px;
}

.warn {
  display: inline-block;
  width: 12px;
  height: 17px;
  margin-left: 2px;
  border-radius: 6px;
  background: #e5737a;
  font-size: 11px;
  line-height: 17px;
  vertical-align: -3px;
  position: relative;
  top: -1px;
}

.card {
  margin-top: 24px;
  padding: 20px;
  border-radius: 16px;
  background: #f5f5fa;
}

.actions + .card {
  margin-top: 16px;
}

.card-theme {
  margin-top: 23px;
  padding: 21px 20px 28px;
}

.card h3 {
  font-size: 14px;
  line-height: 20px;
  font-weight: 600;
  color: #4a4b52;
}

.field-label {
  display: block;
  font-size: 13px;
  line-height: 20px;
  letter-spacing: 0.2px;
  color: #55565e;
}

.name-label {
  margin: 16px 0 9px;
}

.input {
  height: 36px;
  padding-left: 12px;
  border: 1px solid #6e6f78;
  border-radius: 4px;
  line-height: 33px;
  color: #5c5d65;
}

.logo-row {
  display: flex;
  align-items: center;
  margin-top: 28px;
}

.logo-box {
  width: 96px;
  height: 96px;
  border-radius: 14px;
  background: #fff;
}

.logo-meta {
  margin: -2px 0 0 16px;
}

.logo-name {
  display: flex;
  font-size: 14px;
  line-height: 20px;
  color: #55565e;
}

.info-dot {
  width: 12px;
  height: 12px;
  margin: -3px 0 0 5px;
  border-radius: 50%;
  background: #7d7f8e;
  color: #f5f5fa;
  font-size: 8px;
  line-height: 12px;
  text-align: center;
}

.logo-change {
  display: block;
  margin-top: 9px;
  font-size: 13px;
  letter-spacing: 0.2px;
  color: #1680cf;
}

.logo-bg {
  align-self: flex-start;
  margin: 6px 0 0 auto;
  width: 196px;
}

.logo-bg .field-label {
  margin-bottom: 8px;
}

.color-input {
  display: flex;
  height: 36px;
  border: 1px solid #6e6f78;
  border-radius: 4px;
  overflow: hidden;
}

.color-value {
  flex: 1;
  padding-left: 12px;
  line-height: 32px;
  color: #5c5d65;
}

.color-cell {
  width: 52px;
  border-left: 1px solid #6e6f78;
  background: #efeff2;
  display: flex;
  align-items: center;
  justify-content: center;
}

.swatch {
  width: 26px;
  height: 18px;
  border-radius: 4px;
  border: 1px solid #9a9ba0;
}

.sw-white { background: #fff; }
.sw-android { background: #73a857; }
.sw-ios { background: #88b693; }
.sw-primary { background: #518437; }
.sw-secondary { background: #69765f; }
.sw-tertiary { background: #527f7f; }

.two-col {
  display: grid;
  grid-template-columns: 1fr 1fr;
  gap: 25px;
  margin-top: 17px;
}

.three-col {
  display: grid;
  grid-template-columns: repeat(3, 1fr);
  gap: 24px;
  margin-top: 17px;
}

.three-col .field-label {
  margin-bottom: 8px;
}

.os-label {
  display: flex;
  align-items: center;
  height: 24px;
  margin-bottom: 8px;
  letter-spacing: 0.2px;
  color: #55565e;
}

.os-label span {
  padding-bottom: 2px;
}

.os-android {
  fill: #2fc08d;
  margin-right: 15px;
}

.os-apple {
  fill: #33363a;
  margin-right: 15px;
}

.select {
  height: 37px;
  padding: 0 15px 0 12px;
  border: 1px solid #6e6f78;
  border-radius: 4px;
  background: #e2e2e6;
  display: flex;
  align-items: center;
  justify-content: space-between;
  letter-spacing: 0.1px;
  color: #45464d;
}

.select span {
  padding-bottom: 2px;
}
```
